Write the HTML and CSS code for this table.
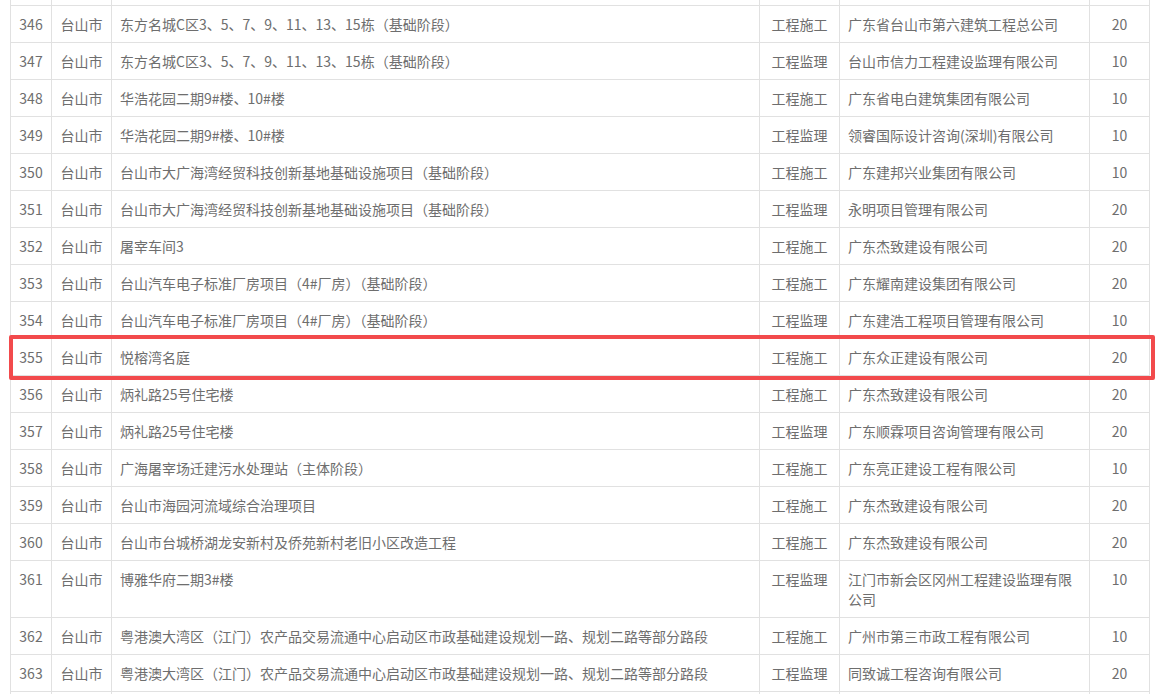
FILE: index.html
```html
<!DOCTYPE html>
<html lang="zh-CN">
<head>
<meta charset="utf-8">
<title>项目列表</title>
<link rel="stylesheet" href="styles.css">
</head>
<body>
<div class="wrap">
<table class="list">
<colgroup>
<col class="c-no"><col class="c-city"><col class="c-name"><col class="c-type"><col class="c-co"><col class="c-score">
</colgroup>
<tbody>
<tr class="spacer-top"><td></td><td></td><td></td><td></td><td></td><td></td></tr>
<tr><td class="ctr">346</td><td class="ctr">台山市</td><td>东方名城C区3、5、7、9、11、13、15栋（基础阶段）</td><td class="ctr">工程施工</td><td>广东省台山市第六建筑工程总公司</td><td class="ctr">20</td></tr>
<tr><td class="ctr">347</td><td class="ctr">台山市</td><td>东方名城C区3、5、7、9、11、13、15栋（基础阶段）</td><td class="ctr">工程监理</td><td>台山市信力工程建设监理有限公司</td><td class="ctr">10</td></tr>
<tr><td class="ctr">348</td><td class="ctr">台山市</td><td>华浩花园二期9#楼、10#楼</td><td class="ctr">工程施工</td><td>广东省电白建筑集团有限公司</td><td class="ctr">10</td></tr>
<tr><td class="ctr">349</td><td class="ctr">台山市</td><td>华浩花园二期9#楼、10#楼</td><td class="ctr">工程监理</td><td>领睿国际设计咨询(深圳)有限公司</td><td class="ctr">10</td></tr>
<tr><td class="ctr">350</td><td class="ctr">台山市</td><td>台山市大广海湾经贸科技创新基地基础设施项目（基础阶段）</td><td class="ctr">工程施工</td><td>广东建邦兴业集团有限公司</td><td class="ctr">10</td></tr>
<tr><td class="ctr">351</td><td class="ctr">台山市</td><td>台山市大广海湾经贸科技创新基地基础设施项目（基础阶段）</td><td class="ctr">工程监理</td><td>永明项目管理有限公司</td><td class="ctr">20</td></tr>
<tr><td class="ctr">352</td><td class="ctr">台山市</td><td>屠宰车间3</td><td class="ctr">工程施工</td><td>广东杰致建设有限公司</td><td class="ctr">20</td></tr>
<tr><td class="ctr">353</td><td class="ctr">台山市</td><td>台山汽车电子标准厂房项目（4#厂房）（基础阶段）</td><td class="ctr">工程施工</td><td>广东耀南建设集团有限公司</td><td class="ctr">20</td></tr>
<tr><td class="ctr">354</td><td class="ctr">台山市</td><td>台山汽车电子标准厂房项目（4#厂房）（基础阶段）</td><td class="ctr">工程监理</td><td>广东建浩工程项目管理有限公司</td><td class="ctr">10</td></tr>
<tr class="marked"><td class="ctr">355</td><td class="ctr">台山市</td><td>悦榕湾名庭</td><td class="ctr">工程施工</td><td>广东众正建设有限公司</td><td class="ctr">20</td></tr>
<tr><td class="ctr">356</td><td class="ctr">台山市</td><td>炳礼路25号住宅楼</td><td class="ctr">工程施工</td><td>广东杰致建设有限公司</td><td class="ctr">20</td></tr>
<tr><td class="ctr">357</td><td class="ctr">台山市</td><td>炳礼路25号住宅楼</td><td class="ctr">工程监理</td><td>广东顺霖项目咨询管理有限公司</td><td class="ctr">20</td></tr>
<tr><td class="ctr">358</td><td class="ctr">台山市</td><td>广海屠宰场迁建污水处理站（主体阶段）</td><td class="ctr">工程施工</td><td>广东亮正建设工程有限公司</td><td class="ctr">10</td></tr>
<tr><td class="ctr">359</td><td class="ctr">台山市</td><td>台山市海园河流域综合治理项目</td><td class="ctr">工程施工</td><td>广东杰致建设有限公司</td><td class="ctr">20</td></tr>
<tr><td class="ctr">360</td><td class="ctr">台山市</td><td>台山市台城桥湖龙安新村及侨苑新村老旧小区改造工程</td><td class="ctr">工程施工</td><td>广东杰致建设有限公司</td><td class="ctr">20</td></tr>
<tr><td class="ctr">361</td><td class="ctr">台山市</td><td>博雅华府二期3#楼</td><td class="ctr">工程监理</td><td>江门市新会区冈州工程建设监理有限公司</td><td class="ctr">10</td></tr>
<tr><td class="ctr">362</td><td class="ctr">台山市</td><td>粤港澳大湾区（江门）农产品交易流通中心启动区市政基础建设规划一路、规划二路等部分路段</td><td class="ctr">工程施工</td><td>广州市第三市政工程有限公司</td><td class="ctr">10</td></tr>
<tr><td class="ctr">363</td><td class="ctr">台山市</td><td>粤港澳大湾区（江门）农产品交易流通中心启动区市政基础建设规划一路、规划二路等部分路段</td><td class="ctr">工程监理</td><td>同致诚工程咨询有限公司</td><td class="ctr">20</td></tr>
<tr class="spacer-bottom"><td></td><td></td><td></td><td></td><td></td><td></td></tr>
</tbody>
</table>
<div class="highlight"></div>
</div>
</body>
</html>
```

FILE: styles.css
```css
html, body {
  margin: 0;
  padding: 0;
  background: #fff;
  overflow: hidden;
}

body {
  font-family: "Noto Sans CJK SC", "Microsoft YaHei", sans-serif;
  font-size: 14px;
  color: #6e6e6e;
}

.wrap {
  position: relative;
  padding-left: 10px;
}

.list {
  border-collapse: collapse;
  table-layout: fixed;
  width: 1139px;
}

.c-no { width: 41px; }
.c-city { width: 60px; }
.c-name { width: 648px; }
.c-type { width: 80px; }
.c-co { width: 250px; }
.c-score { width: 60px; }

.list td {
  border: 1px solid #e1e1e1;
  padding: 8px 8px;
  line-height: 20px;
  vertical-align: top;
  text-align: left;
  white-space: normal;
}

.list td.ctr {
  text-align: center;
  padding-left: 0;
  padding-right: 0;
}

.list .spacer-top td {
  height: 5px;
  padding: 0;
  border-top: hidden;
}

.list .spacer-bottom td {
  height: 20px;
  padding: 0;
  border-bottom: hidden;
}

.highlight {
  position: absolute;
  left: 9px;
  top: 335px;
  width: 1138px;
  height: 37px;
  border: 4px solid #f24a4c;
  border-radius: 2px;
  pointer-events: none;
}
```
